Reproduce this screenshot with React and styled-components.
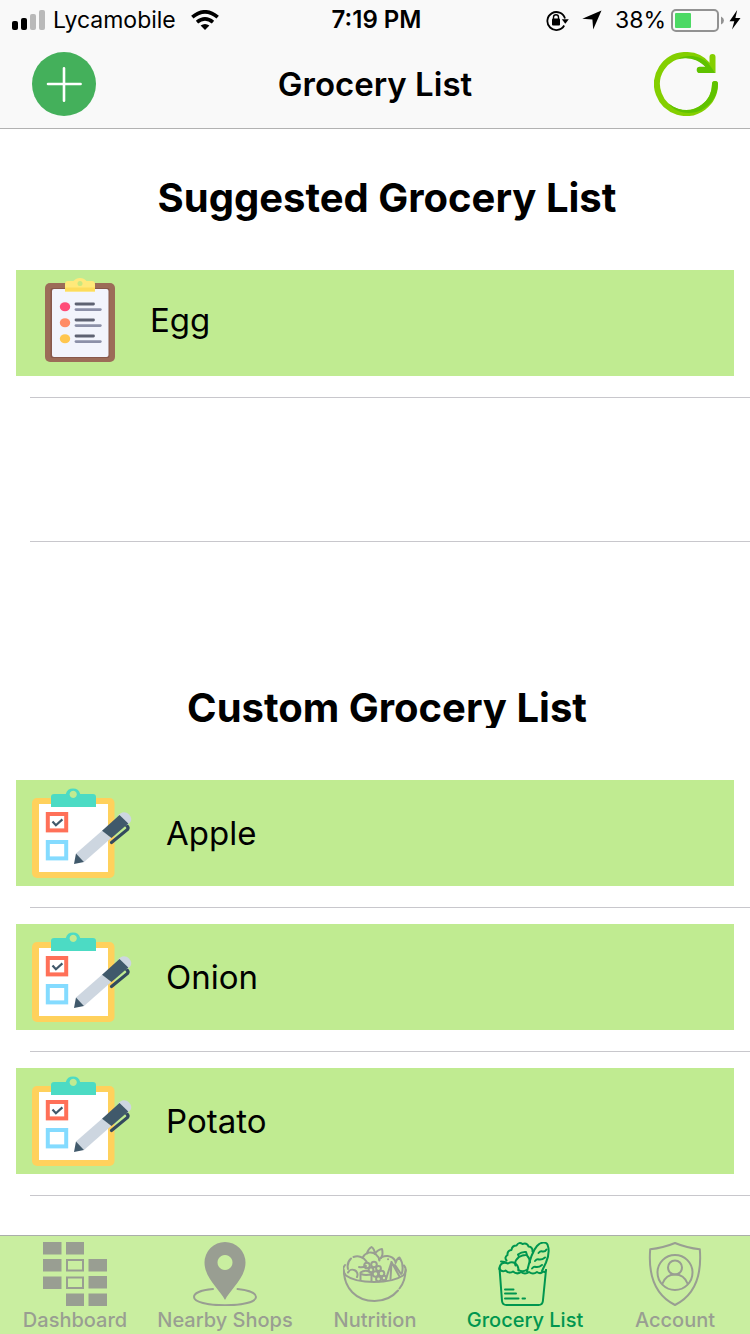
import React from "react";
import styled, { createGlobalStyle } from "styled-components";

const GlobalStyle = createGlobalStyle`
  *, *::before, *::after { box-sizing: border-box; }
  body {
    margin: 0;
    background: #ffffff;
    color: #000000;
    font-family: Inter, "Liberation Sans", sans-serif;
  }
`;

const Screen = styled.div`
  display: flex;
  flex-direction: column;
  min-height: 100vh;
`;

const Header = styled.header`
  position: sticky;
  top: 0;
  z-index: 1;
  background: #f9f9f9;
  border-bottom: 1px solid #b2b2b2;
`;

const StatusBar = styled.div`
  display: grid;
  grid-template-columns: 1fr auto 1fr;
  align-items: center;
  height: 40px;
  padding: 0 9px 0 12px;
  font-size: 23px;
  line-height: 40px;
`;

const StatusGroup = styled.div`
  display: flex;
  align-items: center;
  justify-content: ${(p) => (p.$end ? "flex-end" : "flex-start")};
  gap: ${(p) => p.$gap}px;
`;

const Time = styled.time`
  font-weight: 600;
  font-size: 24px;
`;

const NavBar = styled.div`
  display: grid;
  grid-template-columns: 1fr auto 1fr;
  align-items: center;
  height: 88px;
  padding: 0 32px;
`;

const NavTitle = styled.h1`
  margin: 0;
  font-size: 33px;
  line-height: 40px;
  font-weight: 600;
`;

const IconButton = styled.button`
  display: block;
  width: 64px;
  height: 64px;
  padding: 0;
  border: 0;
  background: none;
  cursor: pointer;
  justify-self: ${(p) => (p.$end ? "end" : "start")};
  svg { display: block; }
`;

const Content = styled.main`
  flex: 1;
`;

const Section = styled.section`
  padding-top: ${(p) => p.$top}px;
`;

const SectionTitle = styled.h2`
  height: 48px;
  margin: 0 0 36px;
  padding-left: 24px;
  overflow: ${(p) => (p.$clip ? "hidden" : "visible")};
  font-size: 40px;
  line-height: 56px;
  font-weight: 750;
  text-align: center;
`;

const List = styled.ul`
  margin: 0;
  padding: 0;
  list-style: none;
`;

const Row = styled.li`
  height: 144px;
  padding: 16px 16px 0;
  background: linear-gradient(#c8c7cc, #c8c7cc) 30px 100% / 100% 1px no-repeat;
`;

const Card = styled.div`
  display: flex;
  align-items: center;
  gap: ${(p) => p.$gap}px;
  height: 106px;
  padding-left: ${(p) => p.$inset}px;
  padding-bottom: ${(p) => p.$lift}px;
  background: #c0eb91;
  font-size: 33px;
  line-height: 40px;
  svg { flex: none; }
`;

const TabBar = styled.nav`
  position: sticky;
  bottom: 0;
  display: grid;
  grid-template-columns: repeat(5, 1fr);
  height: 99px;
  border-top: 1px solid #aaaeaa;
  background: #c9eea0;
`;

const Tab = styled.a`
  display: flex;
  flex-direction: column;
  align-items: center;
  padding-top: 6px;
  color: ${(p) => (p.$active ? "#00964f" : "#999e92")};
  font-size: 20px;
  line-height: 28px;
  font-weight: 500;
  text-decoration: none;
  white-space: nowrap;
  svg { display: block; flex: none; }
`;

const SignalIcon = () => (
  <svg width="33" height="20" viewBox="0 0 33 20" aria-hidden="true">
    <rect x="0" y="11" width="6" height="9" rx="2" />
    <rect x="9" y="8" width="6" height="12" rx="2" />
    <rect x="18" y="4" width="6" height="16" rx="2" fill="#b9b9b9" />
    <rect x="27" y="0" width="6" height="20" rx="2" fill="#b9b9b9" />
  </svg>
);

const WifiIcon = () => (
  <svg width="28" height="20" viewBox="0 0 28 20" fill="none" stroke="#000" strokeWidth="3.6" aria-hidden="true">
    <path d="M1.3 7.2Q14-3.6 26.7 7.2" />
    <path d="M6 12.2Q14 5.6 22 12.2" />
    <path d="M14 20l-4.4-4.4q4.4-3.2 8.8 0z" fill="#000" stroke="none" />
  </svg>
);

const RotationLockIcon = () => (
  <svg width="23" height="21" viewBox="0 0 23 21" fill="none" stroke="#000" aria-hidden="true">
    <path d="M18.200 15.500A9 9 0 1 1 19 8.500" strokeWidth="1.8" />
    <path d="M15.800 9.200h7l-3.500 4.500z" fill="#000" stroke="none" />
    <rect x="6" y="8.500" width="8" height="7" rx="1" fill="#000" stroke="none" />
    <path d="M7.500 9.500V7.300a2.500 2.500 0 0 1 5 0v2.200" strokeWidth="1.4" />
  </svg>
);

const LocationIcon = () => (
  <svg width="20" height="20" viewBox="0 0 20 20" aria-hidden="true">
    <path d="M19.5.5L11.2 19.5 10.4 9.4.3 8.8z" />
  </svg>
);

const BatteryIcon = () => (
  <svg width="53" height="23" viewBox="0 0 53 23" aria-hidden="true">
    <rect x="1" y="1" width="46" height="21" rx="4" fill="none" stroke="#929292" strokeWidth="2" />
    <rect x="4" y="4" width="16" height="15" rx="1" fill="#4cd964" />
    <path d="M50 7.5q3 1.3 3 4t-3 4z" fill="#929292" />
  </svg>
);

const BoltIcon = () => (
  <svg width="12" height="20" viewBox="0 0 12 20" aria-hidden="true">
    <path d="M8.2 0L.5 11.2h4.8L3 19.5 11.5 8H6.4z" />
  </svg>
);

const AddIcon = () => (
  <svg width="64" height="64" viewBox="0 0 64 64" aria-hidden="true">
    <circle cx="32" cy="32" r="32" fill="#44b05b" />
    <path d="M32 16.3v32.4M16 32h32.6" stroke="#fff" strokeWidth="2.6" strokeLinecap="round" />
  </svg>
);

const RefreshIcon = () => (
  <svg width="64" height="64" viewBox="0 0 64 64" fill="none" aria-hidden="true">
    <path d="M61 32A29 29 0 1 1 54 13.100" stroke="#84cf00" strokeWidth="6" strokeLinecap="round" />
    <path d="M58.500 2a3 3 0 0 1 3 3v16l-6-6V5a3 3 0 0 1 3-3z" fill="#84cf00" />
    <path
      d="M61.500 21H45.800a3.100 3.100 0 0 1 0-6.200H51.500C43 6.500 33 4.500 23 7.500 34 1.500 46 4 54 11z"
      fill="#5fc200"
    />
    <path d="M58 32a3 3 0 0 1 6 0C63.500 47 53 57.500 41 60.300 30 62.500 20 59 15 52 28 61 40 59 48 52.500 54 48 58 41 58 32z" fill="#5fc200" />
  </svg>
);

const ClipboardIcon = () => (
  <svg width="70" height="84" viewBox="0 0 70 84" aria-hidden="true">
    <rect x="0" y="5" width="70" height="79" rx="5" fill="#9c6c58" />
    <rect x="5.5" y="10" width="59" height="70" rx="2" fill="#87584b" />
    <rect x="7" y="11" width="56.5" height="68" rx="2" fill="#f2f4fc" />
    <path d="M20 13.5V6q0-3 3-3h5.500Q31 0 35 0t6.500 3H47q3 0 3 3v7.500z" fill="#ffe97a" />
    <path d="M20 9.500h30v4H20z" fill="#fddc5c" />
    <circle cx="35" cy="5.6" r="2.5" fill="#c9e77f" />
    {["#ff4c78", "#ff8c66", "#ffc64f"].map((color, i) => (
      <g key={color} transform={`translate(0 ${i * 16})`}>
        <ellipse cx="20" cy="28.7" rx="5.2" ry="4.5" fill={color} />
        <path d="M31 26h17.500" stroke="#5e6272" strokeWidth="2.8" strokeLinecap="round" />
        <path d="M31 31.600h24.300" stroke="#8c90a8" strokeWidth="2.8" strokeLinecap="round" />
      </g>
    ))}
  </svg>
);

const ChecklistIcon = () => (
  <svg width="100" height="92" viewBox="0 0 100 92" aria-hidden="true">
    <rect x="0" y="11" width="82.5" height="80" rx="5" fill="#ffd15c" />
    <rect x="7" y="17" width="69" height="68" fill="#fff" />
    <path
      d="M19 20V10q0-3 3-3h11.800a7.500 7.500 0 0 1 14.400 0H61q3 0 3 3v10zM41.200 3.800a3.600 3.600 0 1 0 .01 0z"
      fill="#4cdbc4"
      fillRule="evenodd"
    />
    <rect x="15.8" y="27" width="18.4" height="16.4" fill="#fff" stroke="#ff7058" strokeWidth="4" />
    <rect x="15.8" y="55" width="18.4" height="16.4" fill="#fff" stroke="#84dbff" strokeWidth="4" />
    <path d="M20.500 34.500l3.400 3.700 6.500-5.800" fill="none" stroke="#40596b" strokeWidth="2.2" />
    <path d="M79.500 55.500L95.500 42.500q1.500-2-1-4" fill="none" stroke="#334a5e" strokeWidth="3.2" strokeLinecap="round" />
    <path d="M86 29c3-5 8-4.500 11-1.500s3 6.500 0 9l-3 2z" fill="#cdd6e0" />
    <path d="M44 66.500l26-22.800 9.500 7L52 75z" fill="#cdd6e0" />
    <path d="M70 43.700L87.500 28l8.800 8.500-16.800 14.500z" fill="#40596b" />
    <path d="M44 66.500L42 77l10-2z" fill="#40596b" />
  </svg>
);

const TabIcon = ({ children }) => (
  <svg
    width="64"
    height="64"
    viewBox="0 0 64 64"
    fill="none"
    stroke="currentColor"
    strokeWidth="2"
    strokeLinecap="round"
    strokeLinejoin="round"
    aria-hidden="true"
  >
    {children}
  </svg>
);

const DashboardIcon = () => (
  <TabIcon>
    <path
      d="M0 0h18.500v12.500H0zM23 0h18v12.500H23zM0 17h18.500v12.500H0zM45.500 17H64v12.500H45.500zM0 34.500h18.500V47H0zM45.500 34H64v12.500H45.500zM23 51.500h18V64H23zM45.500 51.500H64V64H45.500z"
      fill="currentColor"
      stroke="none"
    />
    <path d="M24 18h16v10.500H24zM24 35.500h16V46H24z" strokeLinejoin="miter" />
  </TabIcon>
);

const PinIcon = () => (
  <TabIcon>
    <path
      d="M32 58C27 48 11.500 36 11.500 20.500a20.500 20.500 0 0 1 41 0C52.500 36 37 48 32 58zM32 13a7.500 7.500 0 1 0 .01 0z"
      fill="currentColor"
      fillRule="evenodd"
      stroke="none"
    />
    <path d="M20 47C9 48 1 51 1 55c0 5 13.500 8.300 31 8.300S63 60 63 55c0-4-8-7-18.500-8" />
  </TabIcon>
);

const BowlIcon = () => (
  <TabIcon>
    <g strokeWidth="2">
      <path d="M2 23C-1 27 .5 31 3 33.500 14 42 48 42 60 33.500c3-2.500 4-6.500 1-10" />
      <path d="M.8 28C1 46 13 59 31.500 59c10 0 18-4 23.500-10.500M56.500 46.500C60.500 41.500 62.500 35 62.500 28" />
      <path d="M5 27A11 11 0 0 1 8 16.500M10.500 15a11 11 0 0 1 13 4.500M5 30.500a5 5 0 0 1 9 4.500" />
      <path d="M16 25c3 1 5 0 7-1M20 15a8.500 8.500 0 0 1 13-2.500q3 2.500 3.500 6" />
      <path d="M24 11.500Q25 7 28.500 5q3 2 3.500 7M32 12q2-4 7-5 1.500 5-1 9" />
      <path d="M36 17.500a10 10 0 0 1 16.500 2M45 17.300h.1" />
      <path d="M52.500 21q1-4 4-5.500Q61 22 59 31M48.500 20L43 37M48.500 20l8 14.500M52 23l6 9M48.500 20l-1 17" />
      <path d="M17.500 38v-7.500q5-3.500 11 0V39M18 32q5 2 10.500 0" />
      <circle cx="24" cy="23.5" r="2.8" />
      <circle cx="31" cy="22.5" r="2.8" />
      <circle cx="28" cy="28" r="2.4" />
      <circle cx="32.5" cy="32" r="2.8" />
      <circle cx="38.5" cy="31.5" r="2.8" />
      <circle cx="35.5" cy="26.5" r="2.4" />
      <circle cx="35.5" cy="37" r="2.4" />
      <circle cx="41" cy="36" r="2.2" />
    </g>
  </TabIcon>
);

const GroceryBagIcon = () => (
  <TabIcon>
    <path d="M6.500 26L9 59q.4 4 4.500 4h32q4 0 4.400-4L53 28" />
    <path d="M6.500 27q2.500 3.500 6 1.500 3.500 3.500 7.500 1 4 3.500 8 .5 4 3 8 0 4 3 8 0 3.500 2.500 6-.5 2 1.500 3-1.500" />
    <path d="M12 47.500h8.500M12 51.500h11M12 56.500h13.500M29.500 56.500h2.500" />
    <path d="M6.500 27C6.500 21 11 20 15 21.500c5-3 10.500.5 10.500 7M15 21.500Q12 19.500 8 19.500" />
    <path d="M13.500 18.500q-2.500-3 1-5.500-.5-4.500 4-5 .5-4.500 5-4.500 2.500-4 6-1.500 4.500-1.500 6 2.500 4.500.5 4 5" />
    <path d="M25 12.500q4-3 8-2.500l1 3q-4-.5-8 2zM26 15q-5 4-3.500 8.500M34 13.500q3 3 3 7M25.500 28q4 2.500 8 0" />
    <path d="M34 29.500C36 21 38.500 10 44 4c4-4.500 9-4 10.500-1.500 1.500 4 1.500 11-1.500 18L49 29" />
    <path d="M45.500 11q2-2.500 4-1.500 2.500.5 4-2M42 19q2-2.500 4-1.500 3 .5 6-2M39 26.500q2-2.500 4-1.500 3 .5 6-2" />
  </TabIcon>
);

const AccountIcon = () => (
  <TabIcon>
    <path d="M32 1Q20 6 7.200 7.200C5 34 12 53 32 63 52 53 59 34 56.800 7.200 44 6 32 1 32 1z" />
    <circle cx="32" cy="30.5" r="17.5" />
    <circle cx="32" cy="25.5" r="7" />
    <path d="M19.500 41.500C22 35 26.500 32.500 32 32.500s10 2.500 12.500 9" />
  </TabIcon>
);

const tabs = [
  { label: "Dashboard", Icon: DashboardIcon },
  { label: "Nearby Shops", Icon: PinIcon },
  { label: "Nutrition", Icon: BowlIcon },
  { label: "Grocery List", Icon: GroceryBagIcon, active: true },
  { label: "Account", Icon: AccountIcon },
];

const customItems = ["Apple", "Onion", "Potato"];

export default function App() {
  return (
    <Screen>
      <GlobalStyle />
      <Header>
        <StatusBar>
          <StatusGroup $gap={8}>
            <SignalIcon />
            <StatusGroup $gap={15}>
              <span>Lycamobile</span>
              <WifiIcon />
            </StatusGroup>
          </StatusGroup>
          <Time>7:19 PM</Time>
          <StatusGroup $end $gap={13}>
            <RotationLockIcon />
            <LocationIcon />
            <StatusGroup $gap={5}>
              <span>38%</span>
              <BatteryIcon />
              <BoltIcon />
            </StatusGroup>
          </StatusGroup>
        </StatusBar>
        <NavBar>
          <IconButton type="button" aria-label="Add item">
            <AddIcon />
          </IconButton>
          <NavTitle>Grocery List</NavTitle>
          <IconButton type="button" aria-label="Refresh" $end>
            <RefreshIcon />
          </IconButton>
        </NavBar>
      </Header>
      <Content>
        <Section $top={41}>
          <SectionTitle>Suggested Grocery List</SectionTitle>
          <List>
            <Row>
              <Card $inset={29} $gap={35} $lift={6}>
                <ClipboardIcon />
                <span>Egg</span>
              </Card>
            </Row>
            <Row aria-hidden="true" />
          </List>
        </Section>
        <Section $top={138}>
          <SectionTitle $clip>Custom Grocery List</SectionTitle>
          <List>
            {customItems.map((name) => (
              <Row key={name}>
                <Card $inset={16} $gap={34} $lift={0}>
                  <ChecklistIcon />
                  <span>{name}</span>
                </Card>
              </Row>
            ))}
          </List>
        </Section>
      </Content>
      <TabBar>
        {tabs.map(({ label, Icon, active }) => (
          <Tab key={label} href="#" $active={active} aria-current={active ? "page" : undefined}>
            <Icon />
            {label}
          </Tab>
        ))}
      </TabBar>
    </Screen>
  );
}
